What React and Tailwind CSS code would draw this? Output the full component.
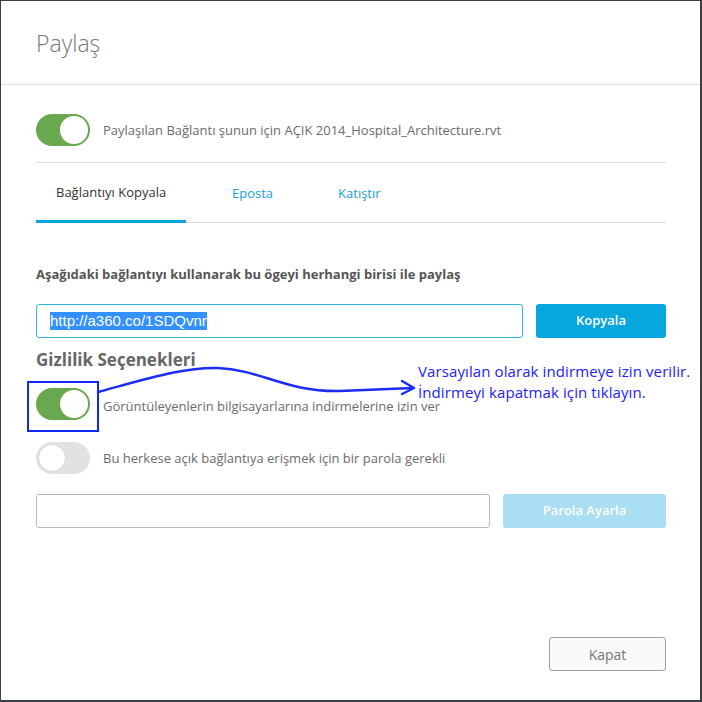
import React from 'react';

function Toggle({ on }) {
  return (
    <div
      className={
        on
          ? 'w-[54px] h-[32px] rounded-full bg-[#6aa84f] flex items-center justify-end p-[2px] shrink-0'
          : 'w-[54px] h-[32px] rounded-full bg-[#e2e2e2] flex items-center justify-start p-[2px] shrink-0'
      }
    >
      <div
        className={
          on
            ? 'w-[28px] h-[28px] rounded-full bg-white'
            : 'w-[28px] h-[28px] rounded-full bg-white border border-[#d6d6d6]'
        }
      />
    </div>
  );
}

export default function App() {
  return (
    <div className="relative w-[702px] h-[702px] bg-white border-t border-l border-r-2 border-b-2 border-[#3b4046] flex flex-col font-['Open_Sans',sans-serif] text-[#6b6b6b]">
      <div className="h-[84px] border-b border-[#dddddd] flex items-center pl-[35px] pt-[2px]">
        <h1 className="text-[23px] font-light text-[#777]">Paylaş</h1>
      </div>

      <div className="flex flex-col pl-[35px] pr-[34px]">
        <div className="flex items-center gap-[13px] mt-[29px] pb-[16px] border-b border-[#dddddd]">
          <Toggle on />
          <span className="text-[13px] pt-[2px]">Paylaşılan Bağlantı şunun için AÇIK 2014_Hospital_Architecture.rvt</span>
        </div>

        <div className="flex items-end h-[60px] border-b border-[#dddddd] text-[13px]">
          <div className="w-[150px] h-full flex items-center pl-[20px] border-b-[3px] border-[#0aa5dd] -mb-px pt-[2px] text-[#333]">
            Bağlantıyı Kopyala
          </div>
          <div className="h-full flex items-center pl-[46px] pt-[2px] text-[#1aa0d8]">Eposta</div>
          <div className="h-full flex items-center pl-[65px] pt-[2px] text-[#1aa0d8]">Katıştır</div>
        </div>

        <p className="mt-[42px] text-[13px] font-bold text-[#555]">
          Aşağıdaki bağlantıyı kullanarak bu ögeyi herhangi birisi ile paylaş
        </p>

        <div className="flex gap-[13px] mt-[19px]">
          <div className="flex-1 h-[34px] rounded-[3px] border border-[#33b3e3] flex items-center pl-[13px]">
            <span className="bg-[#3390ff] text-white text-[15px] leading-[18px] font-['Liberation_Sans',sans-serif]">
              http://a360.co/1SDQvnr
            </span>
          </div>
          <button className="w-[130px] h-[34px] rounded-[3px] bg-[#07a6de] text-white text-[13px] font-semibold">
            Kopyala
          </button>
        </div>

        <h2 className="mt-[9px] text-[17px] font-bold text-[#666]">Gizlilik Seçenekleri</h2>

        <div className="flex items-center gap-[13px] mt-[16px]">
          <Toggle on />
          <span className="text-[13px] pt-[5px]">Görüntüleyenlerin bilgisayarlarına indirmelerine izin ver</span>
        </div>

        <div className="flex items-center gap-[13px] mt-[22px]">
          <Toggle on={false} />
          <span className="text-[13px] pt-[1px]">Bu herkese açık bağlantıya erişmek için bir parola gerekli</span>
        </div>

        <div className="flex gap-[13px] mt-[20px]">
          <div className="flex-1 h-[34px] rounded-[3px] border border-[#b9b9b9]" />
          <button className="w-[163px] h-[34px] rounded-[3px] bg-[#a9def3] text-white text-[13px] font-semibold">
            Parola Ayarla
          </button>
        </div>

        <div className="flex justify-end mt-[109px]">
          <button className="w-[117px] h-[34px] rounded-[3px] border border-[#a0a0a0] bg-[#f9f9f9] text-[14px] text-[#777]">
            Kapat
          </button>
        </div>
      </div>

      <div className="absolute left-[26px] top-[380px] w-[72px] h-[51px] border-2 border-[#1228f2]" />
      <svg className="absolute left-0 top-0" width="700" height="700" viewBox="1 1 700 700" fill="none">
        <path
          d="M98 392 C 150 378, 185 367, 218 368 C 262 370, 285 392, 340 391 L 413 388"
          stroke="#1a2cf5"
          strokeWidth="2.5"
          strokeLinecap="round"
        />
        <path d="M402 381 L 414 388 L 402 394" stroke="#1a2cf5" strokeWidth="2.5" strokeLinecap="round" strokeLinejoin="round" />
      </svg>
      <div className="absolute left-[417px] top-[360px] text-[15px] leading-[21px] tracking-[0.1px] text-[#2222ff]">
        <div>Varsayılan olarak indirmeye izin verilir.</div>
        <div>İndirmeyi kapatmak için tıklayın.</div>
      </div>
    </div>
  );
}
